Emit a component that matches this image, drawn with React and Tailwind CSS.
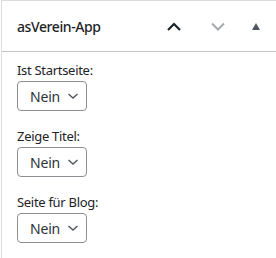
import React from 'react'

const fields = [
  { label: 'Ist Startseite:', value: 'Nein' },
  { label: 'Zeige Titel:', value: 'Nein' },
  { label: 'Seite für Blog:', value: 'Nein' },
]

function SelectBox({ value }) {
  return (
    <div className="mt-[2px] w-[70px] h-[30px] rounded-[4px] border border-[#8c8f94] bg-white flex items-center pl-[12px] pr-[7px] text-[14px] text-[#2c3338]">
      <span className="flex-1 tracking-[-0.2px]">{value}</span>
      <svg width="12" height="8" viewBox="0 0 12 8" fill="none">
        <path d="M1.5 2l4.5 4 4.5-4" stroke="#50575e" strokeWidth="1.4" />
      </svg>
    </div>
  )
}

export default function App() {
  return (
    <div
      className="w-[276px] h-[258px] bg-white overflow-hidden"
      style={{ fontFamily: '"Noto Sans", "Open Sans", sans-serif' }}
    >
      <div className="ml-[1px] h-full border-l border-t border-[#dcdcde]">
        {/* Header */}
        <div className="h-[51px] border-b border-[#c3c4c7] flex items-center pl-[15px]">
          <h2 className="flex-1 text-[14px] font-medium tracking-[-0.4px] text-[#1d2327] mt-[1px]">asVerein-App</h2>
          <div className="flex items-center">
            <div className="w-[44px] h-[36px] flex items-center justify-center">
              <svg width="14" height="9" viewBox="0 0 14 9" fill="none">
                <path d="M1 8l6-6 6 6" stroke="#1d2327" strokeWidth="2.2" />
              </svg>
            </div>
            <div className="w-[44px] h-[36px] flex items-center justify-center">
              <svg width="14" height="9" viewBox="0 0 14 9" fill="none">
                <path d="M1 1.5l6 6 6-6" stroke="#a7aaad" strokeWidth="2" />
              </svg>
            </div>
            <div className="w-[36px] h-[36px] flex items-center justify-center pr-[4px]">
              <svg width="8" height="7" viewBox="0 0 8 7">
                <path d="M4 0l4 7H0z" fill="#50575e" />
              </svg>
            </div>
          </div>
        </div>

        {/* Fields */}
        <div className="pl-[15px] pt-[10px] flex flex-col gap-[17px]">
          {fields.map((f) => (
            <div key={f.label}>
              <p className="text-[13px] leading-[17px] tracking-[-0.3px] text-[#1d2327]">{f.label}</p>
              <SelectBox value={f.value} />
            </div>
          ))}
        </div>
      </div>
    </div>
  )
}
